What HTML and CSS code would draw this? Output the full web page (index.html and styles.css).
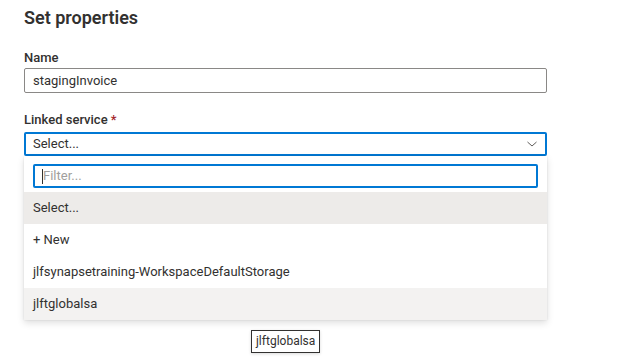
FILE: index.html
```html
<!DOCTYPE html>
<html>
<head>
<meta charset="utf-8">
<link rel="stylesheet" href="styles.css">
</head>
<body>
<div class="panel">
  <h1 class="title">Set properties</h1>
  <div class="field">
    <div class="label">Name</div>
    <div class="textbox">stagingInvoice</div>
  </div>
  <div class="field field-linked">
    <div class="label">Linked service <span class="req">*</span></div>
    <div class="dropdown">
      <div class="dropdown-box">
        <span class="dropdown-text">Select...</span>
        <svg class="chevron" width="12" height="8" viewBox="0 0 12 8"><polyline points="1.5,2 6,6 10.5,2" fill="none" stroke="#605e5c" stroke-width="1"/></svg>
      </div>
      <div class="listbox">
        <div class="filter-wrap">
          <div class="filter"><span class="caret"></span><span class="placeholder">Filter...</span></div>
        </div>
        <div class="option selected">Select...</div>
        <div class="option">+ New</div>
        <div class="option">jlfsynapsetraining-WorkspaceDefaultStorage</div>
        <div class="option hover">jlftglobalsa
          <div class="tooltip">jlftglobalsa</div>
        </div>
      </div>
    </div>
  </div>
</div>
</body>
</html>
```

FILE: styles.css
```css
html, body {
  margin: 0;
  padding: 0;
  background: #ffffff;
}
html {
  height: 100%;
}
body {
  min-height: 100vh;
  font-family: Roboto, "Noto Sans", sans-serif;
  color: #323130;
}
.panel {
  padding: 0 24px;
  width: 523px;
}
.title {
  margin: 0;
  padding-top: 4px;
  font-size: 18px;
  font-weight: 600;
  line-height: 28px;
  height: 28px;
}
.field {
  margin-top: 16px;
}
.field-linked {
  margin-top: 17px;
}
.label {
  font-size: 13px;
  line-height: 20px;
  height: 20px;
  font-weight: 500;
}
.req {
  color: #a4262c;
}
.textbox {
  box-sizing: border-box;
  height: 25px;
  border: 1px solid #8a8886;
  border-radius: 2px;
  padding: 0 8px;
  font-size: 13px;
  line-height: 23px;
}
.field-linked .label {
  margin-bottom: 2px;
}
.dropdown-box {
  box-sizing: border-box;
  height: 24px;
  border: 2px solid #0078d4;
  border-radius: 2px;
  padding: 0 7px;
  font-size: 13px;
  line-height: 20px;
  display: flex;
  align-items: center;
  justify-content: space-between;
}
.chevron {
  margin-right: 0;
}
.listbox {
  background: #fff;
  box-shadow: 0 3px 7px rgba(0,0,0,0.13), 0 0 2px rgba(0,0,0,0.1);
}
.filter-wrap {
  padding: 8px 9px 4px 9px;
}
.filter {
  box-sizing: border-box;
  height: 24px;
  border: 2px solid #0078d4;
  border-radius: 2px;
  padding: 0 7px;
  font-size: 13px;
  line-height: 20px;
  display: flex;
  align-items: center;
}
.caret {
  display: inline-block;
  width: 1px;
  height: 15px;
  background: #323130;
}
.placeholder {
  color: #a19f9d;
}
.option {
  height: 32px;
  line-height: 32px;
  padding: 0 9px;
  font-size: 13px;
  color: #323130;
}
.option.selected {
  background: #edebe9;
}
.option.hover {
  background: #f3f2f1;
  position: relative;
}
.tooltip {
  position: absolute;
  left: 227px;
  top: 42px;
  background: #fff;
  border: 1px solid #323130;
  box-shadow: 0 1px 3px rgba(0,0,0,0.15);
  font-size: 12px;
  line-height: 21px;
  padding: 0 4px;
  color: #323130;
}
```
